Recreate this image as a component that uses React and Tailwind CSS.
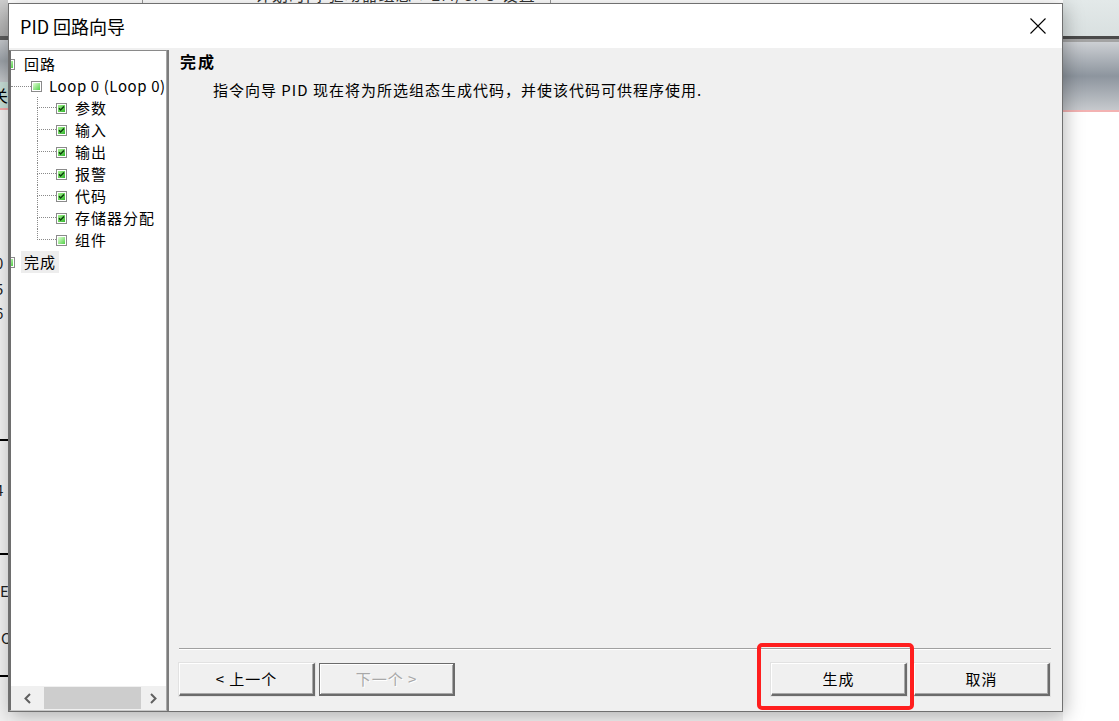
import React from "react";

function NodeIcon({ checked = false }) {
  return (
    <svg width="11" height="11" viewBox="0 0 11 11" className="shrink-0 block">
      <defs>
        <linearGradient id="gLight" x1="0" y1="0" x2="1" y2="1">
          <stop offset="0" stopColor="#e4ffd8" />
          <stop offset="1" stopColor="#52d048" />
        </linearGradient>
        <linearGradient id="gDark" x1="0" y1="0" x2="1" y2="1">
          <stop offset="0" stopColor="#a6f290" />
          <stop offset="1" stopColor="#2fb52a" />
        </linearGradient>
      </defs>
      <rect x="0.5" y="0.5" width="10" height="10" fill="#ffffff" stroke="#8a8a8a" />
      <rect x="2" y="2" width="7" height="7" fill={checked ? "url(#gDark)" : "url(#gLight)"} />
      {checked && (
        <path d="M3 5.2 L4.6 6.9 L8 3.4" stroke="#0b3d0b" strokeWidth="1.4" fill="none" />
      )}
    </svg>
  );
}

function Chevron({ dir = "left" }) {
  return (
    <svg width="9" height="11" viewBox="0 0 9 11" className="block">
      {dir === "left" ? (
        <path d="M7 1 L2.5 5.5 L7 10" stroke="#606060" strokeWidth="2" fill="none" />
      ) : (
        <path d="M2 1 L6.5 5.5 L2 10" stroke="#606060" strokeWidth="2" fill="none" />
      )}
    </svg>
  );
}

function ChildRow({ label, last = false, checked = true }) {
  return (
    <div className="flex h-[22px] items-center">
      <div className="w-[26px] shrink-0" />
      <div className="flex h-[22px] w-[19px] shrink-0 flex-col">
        <div className="h-[11px] border-b border-l border-dotted border-[#8a8a8a]" />
        <div className={"h-[11px] " + (last ? "" : "border-l border-dotted border-[#8a8a8a]")} />
      </div>
      <NodeIcon checked={checked} />
      <span className="ml-[5px] px-[3px] leading-[22px] tracking-[1px] whitespace-nowrap">{label}</span>
    </div>
  );
}

function RaisedButton({ children, disabled = false }) {
  if (disabled) {
    return (
      <div className="flex h-[33px] w-[136px] items-center justify-center border border-b-2 border-r-2 border-[#6b6b6b] bg-[#f0f0f0] shadow-[inset_1px_1px_0_#ffffff,inset_-1px_-1px_0_#a8a8a8] text-[15px] tracking-[1px] text-[#a8a8a8] [text-shadow:1px_1px_0_#ffffff]">
        {children}
      </div>
    );
  }
  return (
    <div className="flex h-[33px] w-[136px] items-center justify-center border-l border-t border-b-2 border-r-2 border-l-white border-t-white border-b-[#6b6b6b] border-r-[#6b6b6b] bg-[#f0f0f0] shadow-[0_0_0_1px_#e2e2e2,inset_-1px_-1px_0_#a8a8a8] text-[15px] tracking-[1px] text-black">
      {children}
    </div>
  );
}

function Glyph({ ch, shift = -5 }) {
  return (
    <div className="h-[20px] overflow-hidden text-[15px] leading-[20px] text-[#222]">
      <span className="block whitespace-nowrap" style={{ marginLeft: shift }}>{ch}</span>
    </div>
  );
}

export default function App() {
  return (
    <div className="relative h-[721px] w-[1119px] overflow-hidden bg-white font-['Noto_Sans_CJK_SC','Noto_Sans',sans-serif] text-black">
      {/* Background application behind the dialog */}
      <div className="flex h-full">
        {/* left strip */}
        <div className="flex w-[8px] shrink-0 flex-col overflow-hidden bg-[#f1f1f1]">
          <div className="h-[36px] bg-gradient-to-b from-[#cfcfcf] to-[#a9a9a9]" />
          <div className="h-[4px] bg-[#5a5a5a]" />
          <div className="h-[42px] bg-gradient-to-b from-[#c3c6ca] via-[#9aa0a6] to-[#c4c7ca]" />
          <div className="h-[26px] overflow-hidden bg-[#c6ddd5] text-[16px] leading-[26px]">
            <span className="-ml-[8px] block">关</span>
          </div>
          <div className="h-[2px] bg-[#f0a8a8]" />
          <div className="h-[143px]" />
          <Glyph ch="0" shift={-5} />
          <div className="h-[6px]" />
          <Glyph ch="5" shift={-5} />
          <div className="h-[4px]" />
          <Glyph ch="6" shift={-5} />
          <div className="h-[116px]" />
          <div className="h-[2px] bg-black" />
          <div className="h-[39px]" />
          <Glyph ch="4" shift={-5} />
          <div className="h-[53px]" />
          <div className="h-[2px] bg-black" />
          <div className="h-[26px]" />
          <Glyph ch="E" shift={0} />
          <div className="h-[27px]" />
          <Glyph ch="C" shift={1} />
          <div className="h-[27px]" />
          <div className="h-[2px] bg-black" />
        </div>
        {/* middle strip (only its top edge shows) */}
        <div className="flex w-[1055px] shrink-0 flex-col bg-[#f3f3f3]">
          <div className="flex h-[3px] overflow-hidden bg-white">
            <div className="ml-[134px] h-full w-[1px] bg-[#9a9a9a]" />
            <span className="-mt-[15px] ml-[112px] whitespace-nowrap text-[16px] leading-[18px] tracking-[1px] text-[#333]">
              计划时间 驱动器组态 ▾ EM/CPU 设置
            </span>
            <div className="ml-[14px] h-full w-[1px] bg-[#9a9a9a]" />
          </div>
        </div>
        {/* right strip */}
        <div className="flex flex-1 flex-col">
          <div className="h-[36px] bg-gradient-to-b from-[#e3e9e9] to-[#d9e0e0]" />
          <div className="h-[3px] bg-[#4a4a4a]" />
          <div className="h-[3px] bg-[#a3a3a3]" />
          <div className="h-[68px] bg-gradient-to-b from-[#cdd0d4] via-[#8d959e] to-[#c6c9cd]" />
          <div className="h-[2px] bg-[#f3b2b2]" />
          <div className="flex-1 bg-white" />
        </div>
      </div>

      {/* Dialog window */}
      <div className="absolute left-[8px] top-[3px] flex h-[709px] w-[1055px] flex-col border border-[#707070] bg-[#f0f0f0] shadow-[2px_4px_18px_rgba(0,0,0,0.28)]">
        {/* title bar */}
        <div className="flex h-[44px] shrink-0 items-center justify-between bg-white pl-[11px] pr-[16px]">
          <span className="text-[18px] leading-[24px] text-black">PID 回路向导</span>
          <svg width="16" height="16" viewBox="0 0 16 16" className="block">
            <path d="M0.5 0.5 L15.5 15.5 M15.5 0.5 L0.5 15.5" stroke="#000" strokeWidth="1.1" />
          </svg>
        </div>

        {/* body */}
        <div className="flex min-h-0 flex-1">
          {/* tree */}
          <div className="mt-[2px] flex w-[158px] shrink-0 flex-col border-b border-l-2 border-r border-t border-b-[#c8c8c8] border-l-[#6e6e6e] border-r-[#a8a8a8] border-t-[#8a8a8a] shadow-[2px_0_0_#7c7c7c] text-[15px]">
            <div className="min-h-0 flex-1 overflow-hidden bg-white pt-[2px]">
              <div className="-ml-[7px] flex h-[22px] items-center">
                <NodeIcon />
                <span className="ml-[6px] px-[3px] leading-[22px] tracking-[1px]">回路</span>
              </div>
              <div className="flex h-[22px] items-center">
                <div className="h-[1px] w-[20px] shrink-0 border-t border-dotted border-[#8a8a8a]" />
                <NodeIcon />
                <span className="ml-[4px] px-[3px] leading-[22px] tracking-[0.6px] whitespace-nowrap">Loop 0 (Loop 0)</span>
              </div>
              <ChildRow label="参数" />
              <ChildRow label="输入" />
              <ChildRow label="输出" />
              <ChildRow label="报警" />
              <ChildRow label="代码" />
              <ChildRow label="存储器分配" />
              <ChildRow label="组件" last checked={false} />
              <div className="-ml-[7px] flex h-[22px] items-center">
                <NodeIcon />
                <span className="ml-[6px] bg-[#ededed] px-[3px] leading-[22px] tracking-[1px]">完成</span>
              </div>
            </div>
            {/* horizontal scrollbar */}
            <div className="flex h-[24px] shrink-0 items-stretch bg-[#f0f0f0]">
              <div className="flex w-[33px] items-center justify-center">
                <Chevron dir="left" />
              </div>
              <div className="my-[1px] w-[97px] bg-[#cdcdcd]" />
              <div className="flex flex-1 items-center justify-center">
                <Chevron dir="right" />
              </div>
            </div>
          </div>

          {/* right content */}
          <div className="ml-[2px] flex min-w-0 flex-1 flex-col">
            <div className="ml-[11px] pt-[2px] text-[16px] font-bold leading-[22px] tracking-[2px] text-black">完成</div>
            <div className="ml-[44px] mt-[7px] whitespace-nowrap text-[15px] leading-[22px] tracking-[1px] text-black">
              指令向导 PID 现在将为所选组态生成代码，并使该代码可供程序使用.
            </div>
            <div className="flex-1" />
            <div className="ml-[10px] mr-[11px] h-[2px] border-b border-t border-b-white border-t-[#a0a0a0]" />
            <div className="mb-[15px] ml-[10px] mr-[12px] mt-[13px] flex items-center">
              <RaisedButton>&lt; 上一个</RaisedButton>
              <div className="w-[4px]" />
              <RaisedButton disabled>下一个 &gt;</RaisedButton>
              <div className="flex-1" />
              <RaisedButton>生成</RaisedButton>
              <div className="w-[7px]" />
              <RaisedButton>取消</RaisedButton>
            </div>
          </div>
        </div>

        {/* red annotation box */}
        <div className="pointer-events-none absolute left-[748px] top-[639px] h-[67px] w-[157px] rounded-[5px] border-[4px] border-[#ff1e1e]" />
      </div>
    </div>
  );
}
